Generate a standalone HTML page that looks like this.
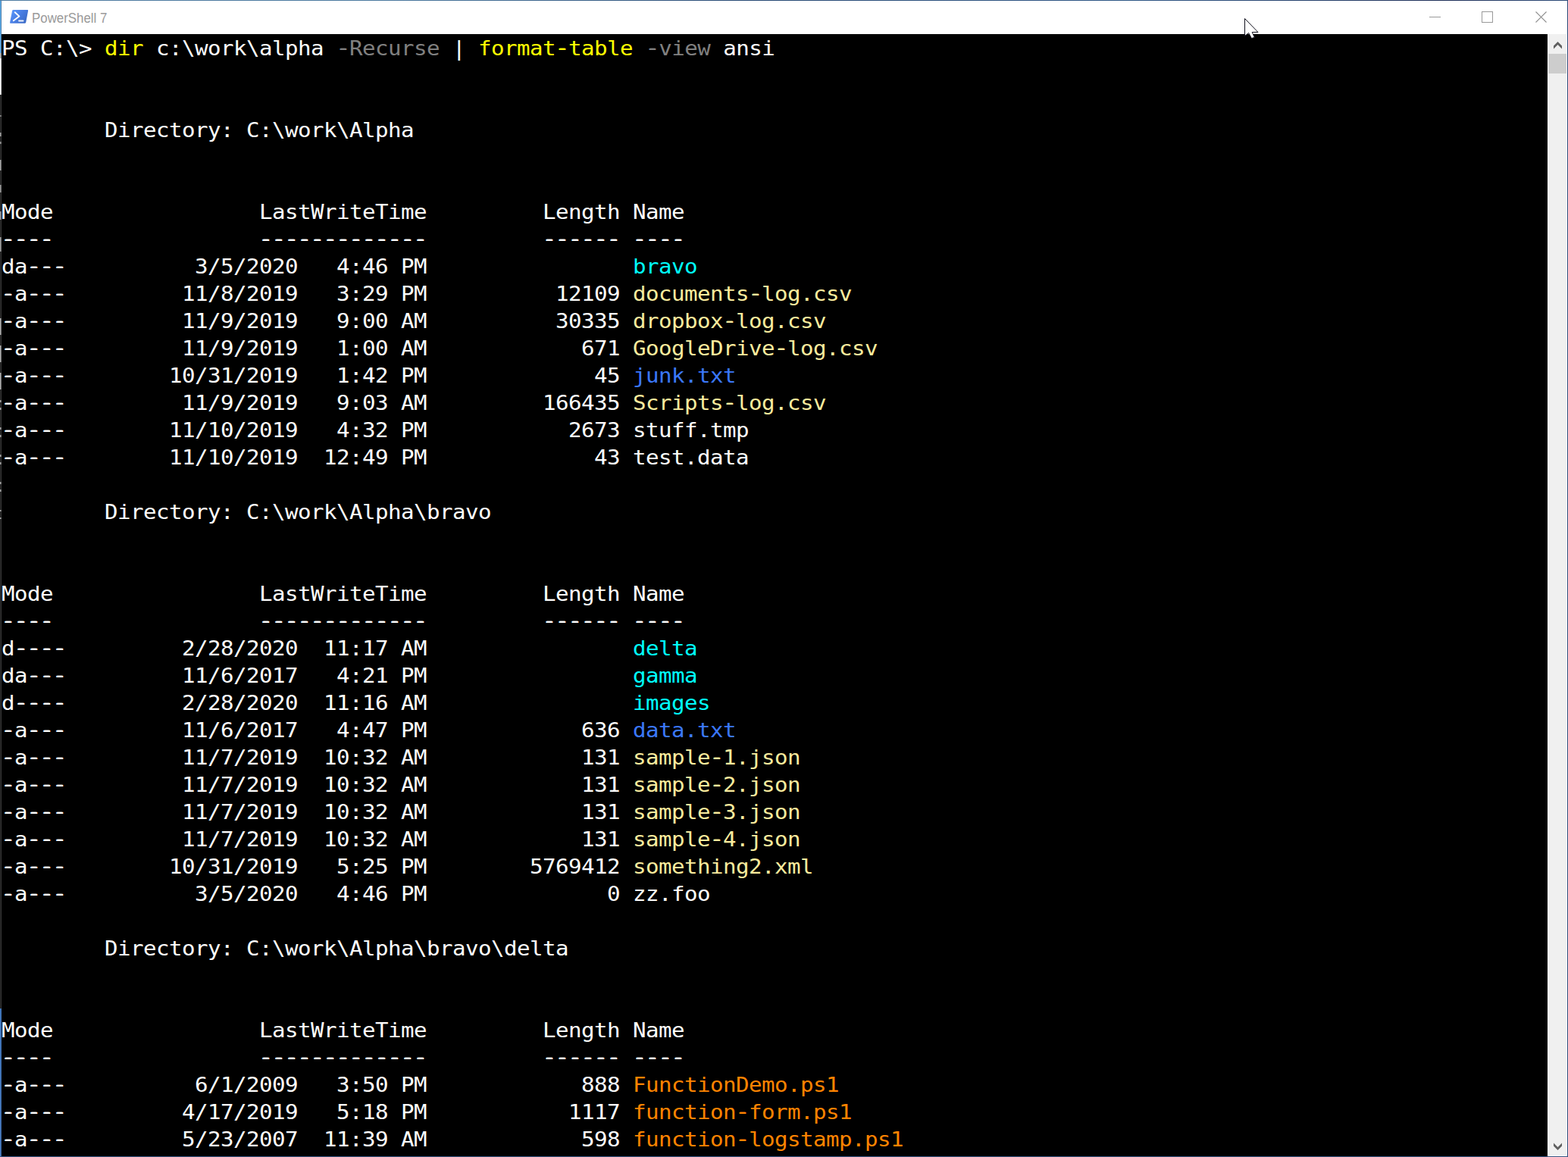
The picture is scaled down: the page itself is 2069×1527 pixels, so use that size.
<!DOCTYPE html>
<html lang="en">
<head>
<meta charset="utf-8">
<title>PowerShell 7</title>
<style>
html, body { margin: 0; padding: 0; }
body { width: 2069px; height: 1527px; overflow: hidden; background: #000; position: relative; font-family: "Liberation Sans", sans-serif; }
#win { position: absolute; left: 0; top: 0; width: 2069px; height: 1527px; overflow: hidden; background: #000; }
#titlebar { position: absolute; left: 2px; top: 1px; width: 2066px; height: 44px; background: #fff; }
#title { position: absolute; left: 40.2px; top: 0; height: 44px; line-height: 46px; font-size: 18px; color: #9a9a9a; white-space: nowrap; transform-origin: 0 0; transform: scaleX(0.937); }
#bt { position: absolute; left: 0; top: 0; width: 2069px; height: 1px; background: linear-gradient(to right, #4f7ca2 0%, #4a789e 25%, #264873 48%, #2e5786 72%, #1e2f58 92%, #2b4a78 100%); }
#br { position: absolute; left: 2068px; top: 0; width: 1px; height: 1527px; background: #2b4a78; }
#bb { position: absolute; left: 0; top: 1526px; width: 2069px; height: 1px; background: #34527f; }
#sb { position: absolute; left: 2042px; top: 45px; width: 26px; height: 1481px; background: #fff; }
#sbt { position: absolute; left: 1px; top: 0; width: 24px; height: 1480px; background: #f0f0f0; }
#thumb { position: absolute; left: 1px; top: 26px; width: 24px; height: 26px; background: #cdcdcd; }
#term { position: absolute; left: 2px; top: 45px; width: 2040px; height: 1481px; overflow: hidden; background: #000; color: #fff; }
#tx { position: absolute; left: 0px; top: 1px; width: 2400px; transform-origin: 0 0; transform: scale(1.12, 1);
  font-family: "DejaVu Sans Mono", "Liberation Mono", monospace; font-size: 26px; letter-spacing: -0.474px; line-height: 36px; font-variant-ligatures: none; font-kerning: none; }
.ln { height: 36px; white-space: pre; }
.d { position: relative; top: -0.8px; text-shadow: 0.6px 0 0 currentColor, -0.6px 0 0 currentColor; }
.y { color: #ffff00; } .g { color: #808080; } .c { color: #00ffff; } .p { color: #fbec9e; } .b { color: #3b78ff; } .o { color: #ff8400; }
svg { position: absolute; left: 0; top: 0; overflow: visible; }
#min { position: absolute; left: 1886px; top: 22px; width: 15px; height: 1px; background: #999; }
#max { position: absolute; left: 1955px; top: 15px; width: 13px; height: 13px; border: 1px solid #999; }
#ls0 { position: absolute; left: 0; top: 0; width: 1px; height: 1527px;
  background: linear-gradient(to bottom, #5cb0ee 0px, #5cb0ee 70px, #b0b0b0 70px, #b0b0b0 77px, #f0f0f0 77px, #f0f0f0 125px, #1c1c1c 125px, #1c1c1c 152px, #777 152px, #777 154px, #1c1c1c 154px, #1c1c1c 175px, #9a9a9a 175px, #9a9a9a 180px, #1c1c1c 180px, #1c1c1c 187px, #888 187px, #888 190px, #1c1c1c 190px, #1c1c1c 211px, #a0a0a0 211px, #a0a0a0 225px, #1c1c1c 225px, #1c1c1c 244px, #909090 244px, #909090 254px, #1c1c1c 254px, #1c1c1c 279px, #909090 279px, #909090 290px, #1c1c1c 290px, #1c1c1c 313px, #999 313px, #999 332px, #1c1c1c 332px, #1c1c1c 420px, #aaa 420px, #aaa 442px, #1c1c1c 442px, #1c1c1c 456px, #aaa 456px, #aaa 478px, #1c1c1c 478px, #1c1c1c 492px, #aaa 492px, #aaa 514px, #1c1c1c 514px, #1c1c1c 528px, #999 528px, #999 531px, #1c1c1c 531px, #1c1c1c 538px, #999 538px, #999 541px, #1c1c1c 541px, #1c1c1c 564px, #999 564px, #999 567px, #1c1c1c 567px, #1c1c1c 574px, #999 574px, #999 577px, #1c1c1c 577px, #1c1c1c 600px, #999 600px, #999 603px, #1c1c1c 603px, #1c1c1c 610px, #999 610px, #999 613px, #1c1c1c 613px, #1c1c1c 636px, #999 636px, #999 639px, #1c1c1c 639px, #1c1c1c 646px, #999 646px, #999 649px, #1c1c1c 649px, #1c1c1c 673px, #999 673px, #999 675px, #1c1c1c 675px, #1c1c1c 683px, #999 683px, #999 685px, #1c1c1c 685px, #1c1c1c 1331px, #3c72b8 1331px, #4a7cc0 1527px); }
#ls1 { position: absolute; left: 1px; top: 0; width: 1px; height: 1527px;
  background: linear-gradient(to bottom, #4c7ca8 0px, #4c7ca8 70px, #909090 70px, #909090 77px, #d0d0d0 77px, #d0d0d0 125px, #383838 125px, #383838 152px, #7a7a7a 152px, #7a7a7a 154px, #383838 154px, #383838 175px, #7a7a7a 175px, #7a7a7a 180px, #383838 180px, #383838 187px, #7a7a7a 187px, #7a7a7a 190px, #383838 190px, #383838 211px, #7a7a7a 211px, #7a7a7a 225px, #383838 225px, #383838 244px, #7a7a7a 244px, #7a7a7a 254px, #383838 254px, #383838 279px, #7a7a7a 279px, #7a7a7a 290px, #383838 290px, #383838 313px, #7a7a7a 313px, #7a7a7a 332px, #383838 332px, #383838 420px, #7a7a7a 420px, #7a7a7a 442px, #383838 442px, #383838 456px, #7a7a7a 456px, #7a7a7a 478px, #383838 478px, #383838 492px, #7a7a7a 492px, #7a7a7a 514px, #383838 514px, #383838 528px, #7a7a7a 528px, #7a7a7a 531px, #383838 531px, #383838 538px, #7a7a7a 538px, #7a7a7a 541px, #383838 541px, #383838 564px, #7a7a7a 564px, #7a7a7a 567px, #383838 567px, #383838 574px, #7a7a7a 574px, #7a7a7a 577px, #383838 577px, #383838 600px, #7a7a7a 600px, #7a7a7a 603px, #383838 603px, #383838 610px, #7a7a7a 610px, #7a7a7a 613px, #383838 613px, #383838 636px, #7a7a7a 636px, #7a7a7a 639px, #383838 639px, #383838 646px, #7a7a7a 646px, #7a7a7a 649px, #383838 649px, #383838 673px, #7a7a7a 673px, #7a7a7a 675px, #383838 675px, #383838 683px, #7a7a7a 683px, #7a7a7a 685px, #383838 685px, #383838 1331px, #4478bc 1331px, #3a65a0 1527px); }
</style>
</head>
<body>
<div id="win">
<div id="titlebar"><div id="title">PowerShell 7</div></div>
<div id="term"><div id="tx">
<div class="ln">PS C:\&gt; <span class="y">dir</span> c:\work\alpha <span class="g"><span class="d">-</span>Recurse</span> | <span class="y">format<span class="d">-</span>table</span> <span class="g"><span class="d">-</span>view</span> ansi</div>
<div class="ln"> </div>
<div class="ln"> </div>
<div class="ln">        Directory: C:\work\Alpha</div>
<div class="ln"> </div>
<div class="ln"> </div>
<div class="ln">Mode                LastWriteTime         Length Name</div>
<div class="ln"><span class="d">----</span>                <span class="d">-------------</span>         <span class="d">------</span> <span class="d">----</span></div>
<div class="ln">da<span class="d">---</span>          3/5/2020   4:46 PM                <span class="c">bravo</span></div>
<div class="ln"><span class="d">-</span>a<span class="d">---</span>         11/8/2019   3:29 PM          12109 <span class="p">documents<span class="d">-</span>log.csv</span></div>
<div class="ln"><span class="d">-</span>a<span class="d">---</span>         11/9/2019   9:00 AM          30335 <span class="p">dropbox<span class="d">-</span>log.csv</span></div>
<div class="ln"><span class="d">-</span>a<span class="d">---</span>         11/9/2019   1:00 AM            671 <span class="p">GoogleDrive<span class="d">-</span>log.csv</span></div>
<div class="ln"><span class="d">-</span>a<span class="d">---</span>        10/31/2019   1:42 PM             45 <span class="b">junk.txt</span></div>
<div class="ln"><span class="d">-</span>a<span class="d">---</span>         11/9/2019   9:03 AM         166435 <span class="p">Scripts<span class="d">-</span>log.csv</span></div>
<div class="ln"><span class="d">-</span>a<span class="d">---</span>        11/10/2019   4:32 PM           2673 stuff.tmp</div>
<div class="ln"><span class="d">-</span>a<span class="d">---</span>        11/10/2019  12:49 PM             43 test.data</div>
<div class="ln"> </div>
<div class="ln">        Directory: C:\work\Alpha\bravo</div>
<div class="ln"> </div>
<div class="ln"> </div>
<div class="ln">Mode                LastWriteTime         Length Name</div>
<div class="ln"><span class="d">----</span>                <span class="d">-------------</span>         <span class="d">------</span> <span class="d">----</span></div>
<div class="ln">d<span class="d">----</span>         2/28/2020  11:17 AM                <span class="c">delta</span></div>
<div class="ln">da<span class="d">---</span>         11/6/2017   4:21 PM                <span class="c">gamma</span></div>
<div class="ln">d<span class="d">----</span>         2/28/2020  11:16 AM                <span class="c">images</span></div>
<div class="ln"><span class="d">-</span>a<span class="d">---</span>         11/6/2017   4:47 PM            636 <span class="b">data.txt</span></div>
<div class="ln"><span class="d">-</span>a<span class="d">---</span>         11/7/2019  10:32 AM            131 <span class="p">sample<span class="d">-</span>1.json</span></div>
<div class="ln"><span class="d">-</span>a<span class="d">---</span>         11/7/2019  10:32 AM            131 <span class="p">sample<span class="d">-</span>2.json</span></div>
<div class="ln"><span class="d">-</span>a<span class="d">---</span>         11/7/2019  10:32 AM            131 <span class="p">sample<span class="d">-</span>3.json</span></div>
<div class="ln"><span class="d">-</span>a<span class="d">---</span>         11/7/2019  10:32 AM            131 <span class="p">sample<span class="d">-</span>4.json</span></div>
<div class="ln"><span class="d">-</span>a<span class="d">---</span>        10/31/2019   5:25 PM        5769412 <span class="p">something2.xml</span></div>
<div class="ln"><span class="d">-</span>a<span class="d">---</span>          3/5/2020   4:46 PM              0 zz.foo</div>
<div class="ln"> </div>
<div class="ln">        Directory: C:\work\Alpha\bravo\delta</div>
<div class="ln"> </div>
<div class="ln"> </div>
<div class="ln">Mode                LastWriteTime         Length Name</div>
<div class="ln"><span class="d">----</span>                <span class="d">-------------</span>         <span class="d">------</span> <span class="d">----</span></div>
<div class="ln"><span class="d">-</span>a<span class="d">---</span>          6/1/2009   3:50 PM            888 <span class="o">FunctionDemo.ps1</span></div>
<div class="ln"><span class="d">-</span>a<span class="d">---</span>         4/17/2019   5:18 PM           1117 <span class="o">function<span class="d">-</span>form.ps1</span></div>
<div class="ln"><span class="d">-</span>a<span class="d">---</span>         5/23/2007  11:39 AM            598 <span class="o">function<span class="d">-</span>logstamp.ps1</span></div>
</div></div>
<div id="sb"><div id="sbt"></div><div id="thumb"></div></div>
<div id="ls0"></div><div id="ls1"></div><div id="bt"></div><div id="br"></div><div id="bb"></div>
<div id="min"></div><div id="max"></div>
<svg width="2069" height="1527" viewBox="0 0 2069 1527">
  <defs>
    <linearGradient id="psg" x1="0" y1="0" x2="1" y2="0.6">
      <stop offset="0" stop-color="#5c9bff"/>
      <stop offset="0.5" stop-color="#4a80e6"/>
      <stop offset="1" stop-color="#3c6cc8"/>
    </linearGradient>
  </defs>
  <!-- PowerShell icon -->
  <path d="M17.6 13 H36.2 Q37.4 13 37.1 14.2 L34.2 29.6 Q33.9 30.8 32.7 30.8 H14 Q12.8 30.8 13.1 29.6 L16.1 14.2 Q16.4 13 17.6 13 Z" fill="url(#psg)"/>
  <path d="M19.7 16.3 L25.4 21.5 L17.8 27.3" fill="none" stroke="#fff" stroke-width="1.9" stroke-linecap="round" stroke-linejoin="round" opacity="0.96"/>
  <path d="M25 27.5 H30.6" fill="none" stroke="#fff" stroke-width="1.8" stroke-linecap="round" opacity="0.92"/>
  <!-- close button -->
  <path d="M2026.5 15.5 L2040.5 29.5 M2040.5 15.5 L2026.5 29.5" fill="none" stroke="#8c8c8c" stroke-width="1.1"/>
  <!-- scrollbar arrows -->
  <path d="M2050 60.5 L2055.5 55 L2061 60.5 V64.5 L2055.5 59 L2050 64.5 Z" fill="#606060"/>
  <path d="M2050 1508.5 L2055.5 1514 L2061 1508.5 V1512.5 L2055.5 1518 L2050 1512.5 Z" fill="#606060"/>
  <!-- mouse pointer -->
  <path d="M1642.5 24.5 V47.5 L1647.6 43.4 L1651.4 50.5 L1655.4 49.4 L1652.2 42.5 H1660 Z" fill="#fff" stroke="#10101c" stroke-width="1" stroke-linejoin="miter"/>
</svg>
</div>
</body>
</html>
